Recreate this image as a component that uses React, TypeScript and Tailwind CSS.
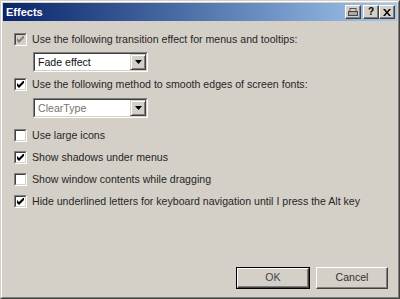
import React from "react";

const font = "font-['Tahoma','Liberation_Sans',sans-serif]";

interface CheckRowProps {
  label: string;
  checked?: boolean;
  disabled?: boolean;
}

const CheckMark: React.FC<{ color: string }> = ({ color }) => (
  <svg width="7" height="7" viewBox="0 0 7 7">
    <path d="M0 2v3l2 2 5-5V-1L2 4z" fill={color} />
  </svg>
);

const CheckBox: React.FC<{ checked?: boolean; disabled?: boolean }> = ({ checked, disabled }) => (
  <span className="block w-[13px] h-[13px] border border-t-[#808080] border-l-[#808080] border-r-white border-b-white shrink-0">
    <span
      className={`flex items-center justify-center w-[11px] h-[11px] border border-t-[#404040] border-l-[#404040] border-r-[#d4d0c8] border-b-[#d4d0c8] ${
        disabled ? "bg-[#d4d0c8]" : "bg-white"
      }`}
    >
      {checked && <CheckMark color={disabled ? "#808080" : "#000"} />}
    </span>
  </span>
);

const CheckRow: React.FC<CheckRowProps> = ({ label, checked, disabled }) => (
  <div className="flex items-center gap-[5px] h-[13px]">
    <CheckBox checked={checked} disabled={disabled} />
    <span className="text-[10.6px] leading-none text-[#262626] whitespace-nowrap">{label}</span>
  </div>
);

const Select: React.FC<{ value: string; muted?: boolean }> = ({ value, muted }) => (
  <div className="ml-[19px] w-[115px] h-[20px] border border-t-[#808080] border-l-[#808080] border-r-white border-b-white">
    <div className="flex items-center h-full border border-t-[#404040] border-l-[#404040] border-r-[#d4d0c8] border-b-[#d4d0c8] bg-white">
      <span className={`flex-1 pl-[3px] text-[10.6px] leading-none ${muted ? "text-[#7b716c]" : "text-[#111]"}`}>
        {value}
      </span>
      <span className="flex items-center justify-center w-[16px] h-[16px] bg-[#d4d0c8] border border-t-[#d4d0c8] border-l-[#d4d0c8] border-r-[#404040] border-b-[#404040] shadow-[inset_1px_1px_0_#fff,inset_-1px_-1px_0_#808080]">
        <svg width="7" height="4" viewBox="0 0 7 4">
          <path d="M0 0h7L3.5 4z" fill="#000" />
        </svg>
      </span>
    </div>
  </div>
);

const CaptionButton: React.FC<{ children: React.ReactNode }> = ({ children }) => (
  <span className="flex items-center justify-center w-[16px] h-[14px] bg-[#d4d0c8] border border-t-white border-l-white border-r-[#404040] border-b-[#404040] shadow-[inset_-1px_-1px_0_#808080] text-[10px] font-bold text-black leading-none">
    {children}
  </span>
);

const App: React.FC = () => {
  return (
    <div className={`w-[400px] h-[299px] ${font} bg-[#d4d0c8] border border-t-[#d4d0c8] border-l-[#d4d0c8] border-r-[#404040] border-b-[#404040]`}>
      <div className="flex flex-col h-full border border-t-white border-l-white border-r-[#808080] border-b-[#808080] p-px">
        <div className="flex items-center justify-between h-[18px] pl-[3px] pr-[2px] bg-gradient-to-r from-[#0a246a] to-[#a6caf0]">
          <span className="text-white font-bold text-[11px] leading-none">Effects</span>
          <div className="flex items-center">
            <CaptionButton>
              <svg width="10" height="8" viewBox="0 0 10 8">
                <rect x="2" y="0.5" width="6" height="3" fill="none" stroke="#555" />
                <rect x="0.5" y="3.5" width="9" height="4" fill="#aaa" stroke="#444" />
              </svg>
            </CaptionButton>
            <span className="w-[2px]" />
            <CaptionButton>?</CaptionButton>
            <CaptionButton>
              <svg width="8" height="7" viewBox="0 0 8 7">
                <path d="M0 0h2l2 2.5L6 0h2L5 3.5 8 7H6L4 4.5 2 7H0l3-3.5z" fill="#000" />
              </svg>
            </CaptionButton>
          </div>
        </div>

        <div className="flex flex-col flex-1 pl-[11px] pt-[12px]">
          <CheckRow label="Use the following transition effect for menus and tooltips:" checked disabled />
          <div className="mt-[6px]">
            <Select value="Fade effect" />
          </div>
          <div className="mt-[6px]">
            <CheckRow label="Use the following method to smooth edges of screen fonts:" checked />
          </div>
          <div className="mt-[7px]">
            <Select value="ClearType" muted />
          </div>
          <div className="flex flex-col gap-[9px] mt-[11px]">
            <CheckRow label="Use large icons" />
            <CheckRow label="Show shadows under menus" checked />
            <CheckRow label="Show window contents while dragging" />
            <CheckRow label="Hide underlined letters for keyboard navigation until I press the Alt key" checked />
          </div>

          <div className="flex justify-end gap-[6px] mt-auto mb-[7px] pr-[9px]">
            <button className="w-[74px] h-[22px] border border-black bg-[#d4d0c8]">
              <span className="flex items-center justify-center h-full border border-t-white border-l-white border-r-[#404040] border-b-[#404040] shadow-[inset_-1px_-1px_0_#808080] text-[10.6px] text-[#444]">
                OK
              </span>
            </button>
            <button className="w-[72px] h-[22px] bg-[#d4d0c8] border border-t-white border-l-white border-r-[#404040] border-b-[#404040] shadow-[inset_-1px_-1px_0_#808080] text-[10.6px] text-[#333]">
              Cancel
            </button>
          </div>
        </div>
      </div>
    </div>
  );
};

export default App;
